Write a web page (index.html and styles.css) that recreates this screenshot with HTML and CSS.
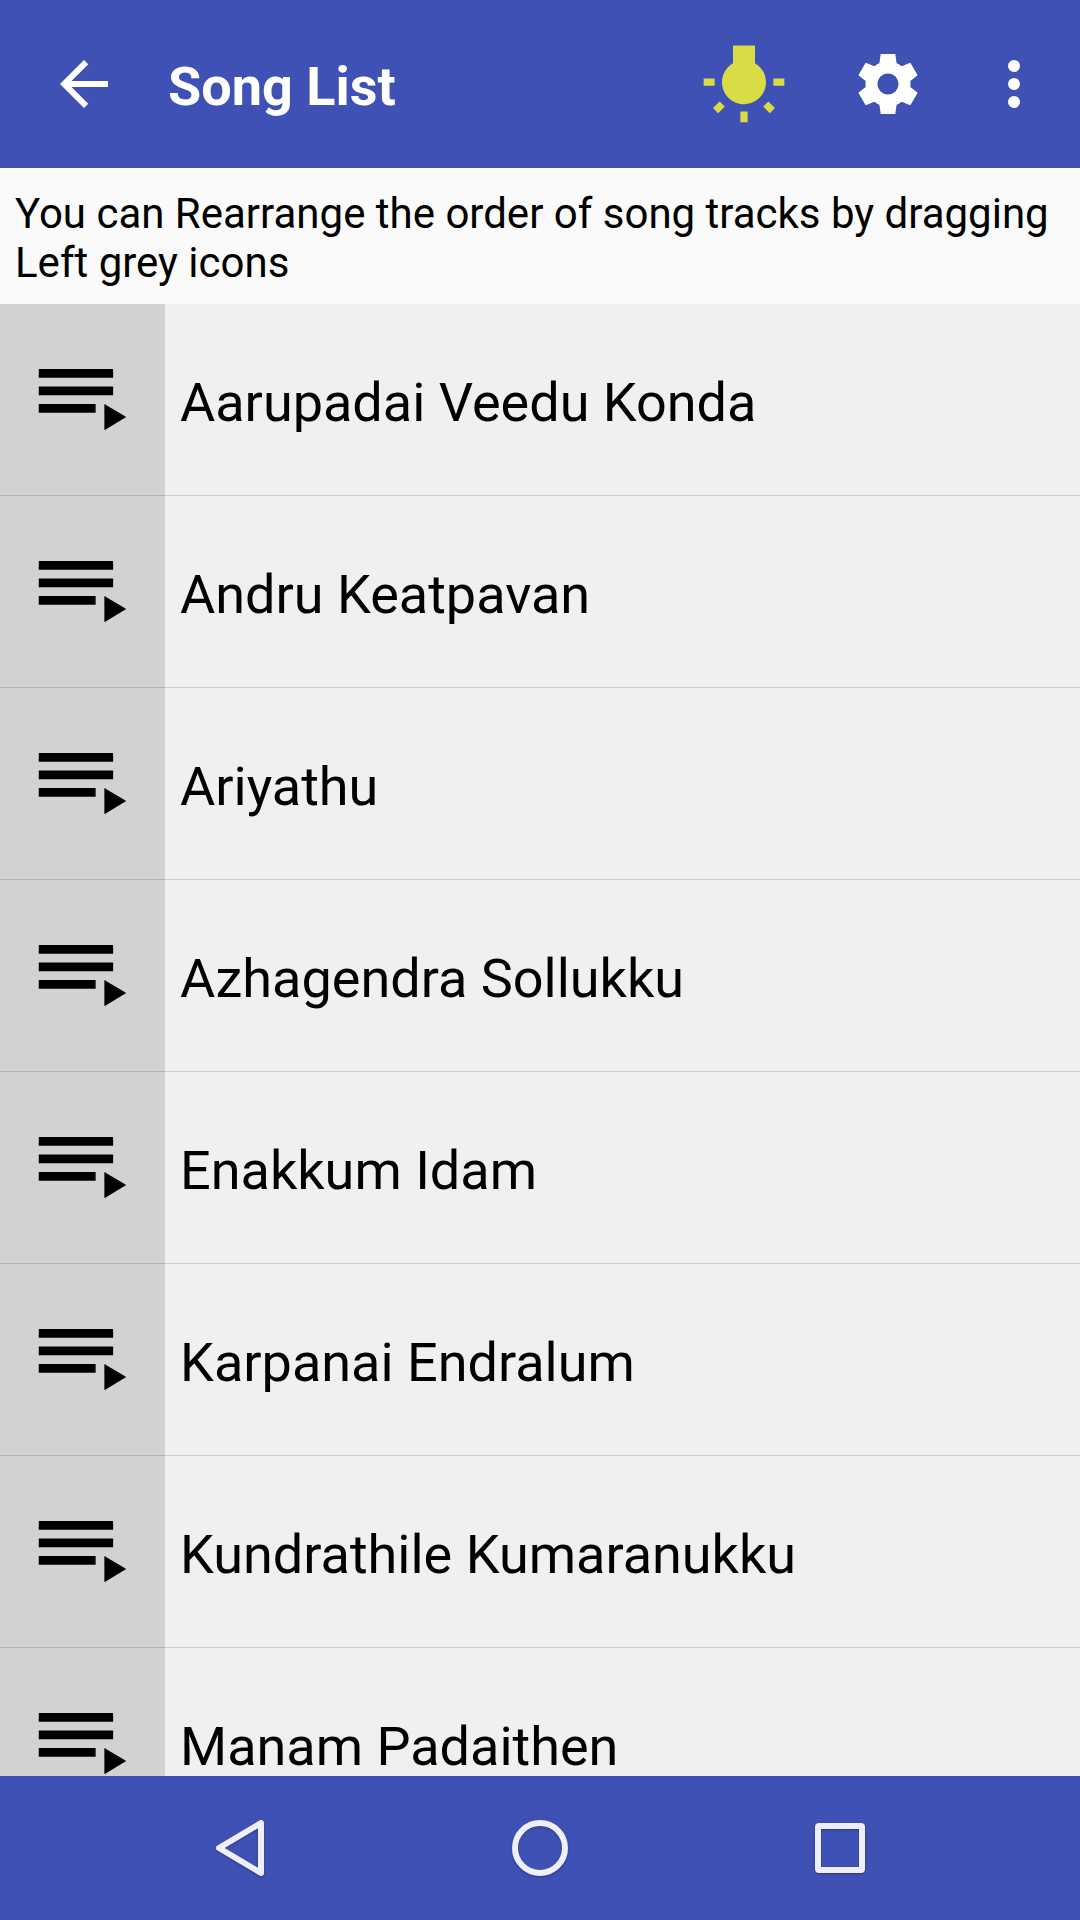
FILE: index.html
```html
<!DOCTYPE html>
<html lang="en">
<head>
    <meta charset="utf-8">
    <meta name="viewport" content="width=device-width, initial-scale=1">
    <title>Song List</title>
    <link rel="stylesheet" href="styles.css">
</head>
<body>
    <!-- shared by every row -->
    <svg class="sprite" aria-hidden="true">
        <symbol id="playlist" viewBox="0 0 24 24">
            <path d="M19 9H2v2h17V9zm0-4H2v2h17V5zM2 15h13v-2H2v2zm15-2v6l5-3-5-3z"/>
        </symbol>
    </svg>

    <header class="toolbar">
        <button class="iconBtn" aria-label="Back">
            <svg class="icon" viewBox="0 0 24 24"><path d="M20 11H7.83l5.59-5.59L12 4l-8 8 8 8 1.41-1.41L7.83 13H20v-2z"/></svg>
        </button>
        <h1 class="title">Song List</h1>
        <div class="actions">
            <button class="iconBtn action bulb" aria-label="Toggle light">
                <svg class="icon" viewBox="0 0 24 24"><path d="M3.55 18.54l1.41 1.41 1.8-1.79-1.41-1.41-1.8 1.79zM11 22.45h2V19.5h-2v2.95zM4 10.5H1v2h3v-2zm11-4.19V1.5H9v4.81C7.21 7.35 6 9.28 6 11.5c0 3.31 2.69 6 6 6s6-2.69 6-6c0-2.22-1.21-4.15-3-5.19zm5 4.19v2h3v-2h-3zm-2.76 7.66l1.79 1.8 1.41-1.41-1.8-1.79-1.4 1.4z"/></svg>
            </button>
            <button class="iconBtn action" aria-label="Settings">
                <svg class="icon" viewBox="0 0 24 24"><path d="M9.57 2h4.86l.44 3.07c.61.25 1.17.58 1.69.98l2.88-1.15 2.43 4.2-2.44 1.92c.04.32.07.64.07.98s-.03.66-.07.98l2.44 1.92-2.43 4.2-2.88-1.15c-.52.4-1.08.73-1.69.98L14.43 22H9.57l-.44-3.07c-.61-.25-1.17-.58-1.69-.98L4.56 19.1l-2.43-4.2 2.44-1.92c-.04-.32-.07-.64-.07-.98s.03-.66.07-.98L2.13 9.1l2.43-4.2 2.88 1.15c.52-.4 1.08-.73 1.69-.98zM12 15.5c1.93 0 3.5-1.57 3.5-3.5s-1.57-3.5-3.5-3.5-3.5 1.57-3.5 3.5 1.57 3.5 3.5 3.5z" fill-rule="evenodd"/></svg>
            </button>
            <button class="iconBtn more" aria-label="More options">
                <svg class="icon" viewBox="0 0 24 24"><circle cx="12" cy="6" r="2"/><circle cx="12" cy="12" r="2"/><circle cx="12" cy="18" r="2"/></svg>
            </button>
        </div>
    </header>

    <p class="hint">You can Rearrange the order of song tracks by dragging Left grey icons</p>

    <ul class="songs">
        <li class="song">
            <span class="handle"><svg class="playlist"><use href="#playlist"/></svg></span>
            <span class="name">Aarupadai Veedu Konda</span>
        </li>
        <li class="song">
            <span class="handle"><svg class="playlist"><use href="#playlist"/></svg></span>
            <span class="name">Andru Keatpavan</span>
        </li>
        <li class="song">
            <span class="handle"><svg class="playlist"><use href="#playlist"/></svg></span>
            <span class="name">Ariyathu</span>
        </li>
        <li class="song">
            <span class="handle"><svg class="playlist"><use href="#playlist"/></svg></span>
            <span class="name">Azhagendra Sollukku</span>
        </li>
        <li class="song">
            <span class="handle"><svg class="playlist"><use href="#playlist"/></svg></span>
            <span class="name">Enakkum Idam</span>
        </li>
        <li class="song">
            <span class="handle"><svg class="playlist"><use href="#playlist"/></svg></span>
            <span class="name">Karpanai Endralum</span>
        </li>
        <li class="song">
            <span class="handle"><svg class="playlist"><use href="#playlist"/></svg></span>
            <span class="name">Kundrathile Kumaranukku</span>
        </li>
        <li class="song">
            <span class="handle"><svg class="playlist"><use href="#playlist"/></svg></span>
            <span class="name">Manam Padaithen</span>
        </li>
    </ul>

    <nav class="navBar">
        <button class="navBtn" aria-label="Back">
            <svg class="navIcon" viewBox="0 0 72 72"><path d="M57 11v50L15 36z"/></svg>
        </button>
        <button class="navBtn" aria-label="Home">
            <svg class="navIcon" viewBox="0 0 72 72"><circle cx="36" cy="36" r="25"/></svg>
        </button>
        <button class="navBtn" aria-label="Recent apps">
            <svg class="navIcon" viewBox="0 0 72 72"><rect x="14" y="14" width="44" height="44" rx="1"/></svg>
        </button>
    </nav>
</body>
</html>
```
FILE: styles.css
```css
* {
    box-sizing: border-box;
}

body {
    margin: 0;
    height: 100vh;
    display: flex;
    flex-direction: column;
    background-color: #fafafa;
    color: #000;
    font-family: Roboto, sans-serif;
}

button {
    padding: 0;
    border: 0;
    background: none;
    color: inherit;
}

.sprite {
    display: none;
}

/* top bar */
.toolbar {
    flex: none;
    display: flex;
    align-items: center;
    height: 168px;
    padding: 0 12px 0 48px;
    background-color: #3f51b5;
    color: #fff;
}

.iconBtn {
    display: flex;
    align-items: center;
    justify-content: center;
}

.icon {
    width: 72px;
    height: 72px;
    fill: currentColor;
}

.action {
    width: 144px;
}

.more {
    width: 108px;
}

.bulb {
    color: #d9dc44;
}

.bulb .icon {
    width: 88px;
    height: 88px;
}

.title {
    margin: 0;
    padding: 6px 0 0 48px;
    font-size: 54px;
    line-height: 64px;
}

.actions {
    display: flex;
    align-items: center;
    margin-left: auto;
}

.hint {
    flex: none;
    margin: 0;
    padding: 21px 15px 17px;
    font-size: 42px;
    line-height: 49px;
}

/* song rows */
.songs {
    flex: 1;
    min-height: 0;
    margin: 0;
    padding: 0;
    overflow: hidden;
    list-style: none;
    background-color: #f0f0f0;
}

.song {
    display: flex;
    height: 192px;
}

.handle,
.name {
    display: flex;
    align-items: center;
    border-bottom: 1px solid rgba(0, 0, 0, 0.14);
}

.handle {
    justify-content: center;
    width: 165px;
    background-color: #d2d2d2;
}

.playlist {
    width: 105px;
    height: 105px;
}

.name {
    flex: 1;
    padding: 6px 15px 0;
    font-size: 54px;
    line-height: 64px;
}

/* bottom bar */
.navBar {
    flex: none;
    display: flex;
    align-items: center;
    justify-content: center;
    height: 144px;
    background-color: #3f51b5;
}

.navBtn {
    display: flex;
    justify-content: center;
    width: 300px;
}

.navIcon {
    width: 72px;
    height: 72px;
    fill: none;
    stroke: #eeeff9;
    stroke-width: 6;
    stroke-linejoin: round;
    filter: drop-shadow(0 1px 1px rgba(0, 0, 0, 0.3));
}
```
